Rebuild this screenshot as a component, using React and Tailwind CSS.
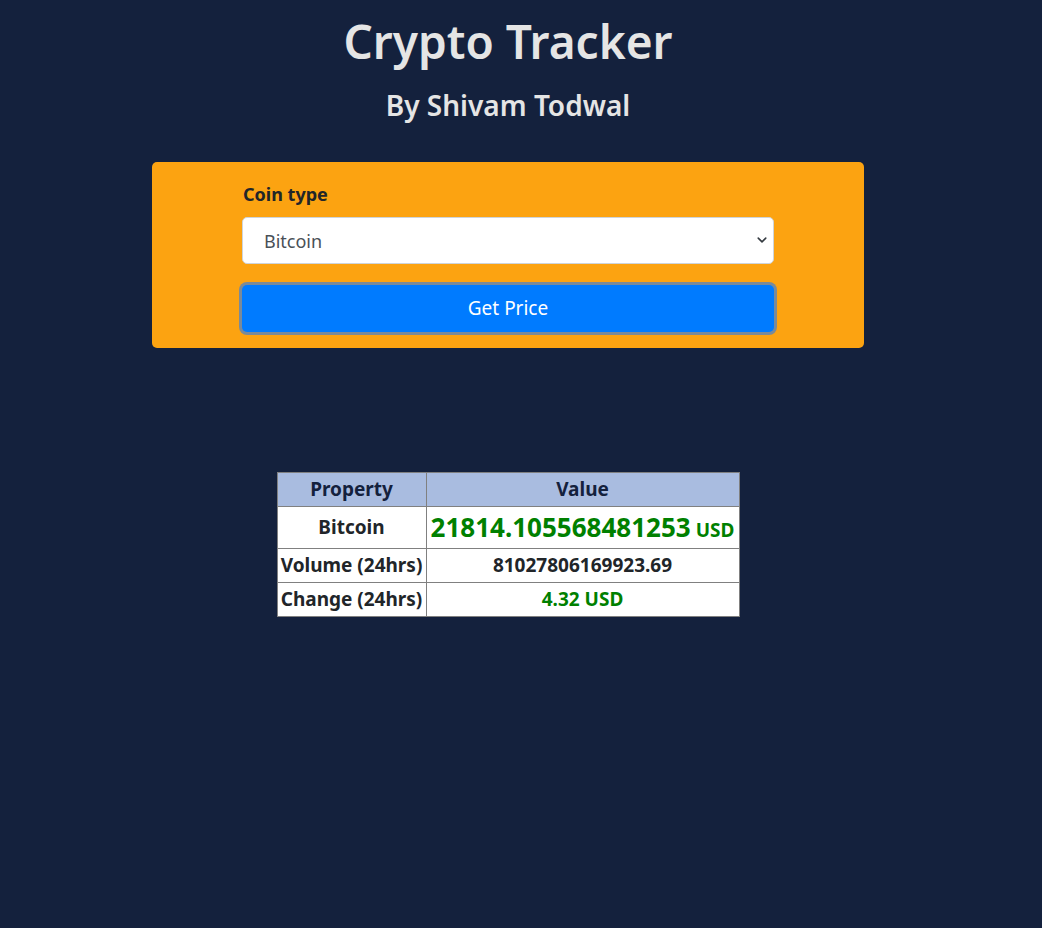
export default function App() {
  return (
    <div
      className="min-h-[928px] bg-[#14213d] pr-[26px] text-[#e5e5e5]"
      style={{ fontFamily: '"Noto Sans", "Open Sans", sans-serif' }}
    >
      <div className="flex flex-col items-center pt-[8px]">
        <h1 className="text-[46px] font-semibold leading-[66px]">Crypto Tracker</h1>
        <h2 className="mt-[11px] text-[28px] font-semibold leading-[40px]">By Shivam Todwal</h2>

        <div className="mt-[37px] flex w-[712px] justify-center rounded-[5px] bg-[#fca311] pt-[18px] pb-[14px]">
          <div className="flex w-[532px] flex-col">
            <label className="pl-[1px] text-[18px] font-bold leading-[28px] text-[#212529]">Coin type</label>
            <div className="relative mt-[9px]">
              <select className="h-[47px] w-full appearance-none rounded-[5px] border border-[#ced4da] bg-white pl-[21px] pt-[2px] text-[18px] text-[#495057] outline-none">
                <option>Bitcoin</option>
                <option>Ethereum</option>
                <option>Litecoin</option>
              </select>
              <svg className="pointer-events-none absolute top-[18px] right-[7px]" width="10" height="10" viewBox="0 0 16 16">
                <path d="M2 5l6 6 6-6" fill="none" stroke="#343a40" strokeWidth="2.5" strokeLinecap="round" strokeLinejoin="round" />
              </svg>
            </div>
            <button className="mt-[21px] mb-[2px] h-[47px] w-full rounded-[5px] bg-[#007bff] text-[19px] text-white ring-[3px] ring-[#7a8a99]">
              Get Price
            </button>
          </div>
        </div>

        <table className="mt-[124px] w-[463px] border-collapse text-center text-[19px] font-bold text-[#212529]">
          <thead>
            <tr className="bg-[#a9bce0] text-[#14213d]">
              <th className="h-[34px] w-[149px] border border-[#808080]">Property</th>
              <th className="border border-[#808080]">Value</th>
            </tr>
          </thead>
          <tbody className="bg-white">
            <tr>
              <td className="h-[42px] border border-[#808080]">Bitcoin</td>
              <td className="border border-[#808080] whitespace-nowrap text-[#008000]">
                <span className="text-[26px]">21814.105568481253</span>{' '}
                <span className="text-[19px]">USD</span>
              </td>
            </tr>
            <tr>
              <td className="h-[34px] border border-[#808080] whitespace-nowrap">Volume (24hrs)</td>
              <td className="border border-[#808080]">81027806169923.69</td>
            </tr>
            <tr>
              <td className="h-[34px] border border-[#808080] whitespace-nowrap">Change (24hrs)</td>
              <td className="border border-[#808080] text-[#008000]">4.32 USD</td>
            </tr>
          </tbody>
        </table>
      </div>
    </div>
  );
}
